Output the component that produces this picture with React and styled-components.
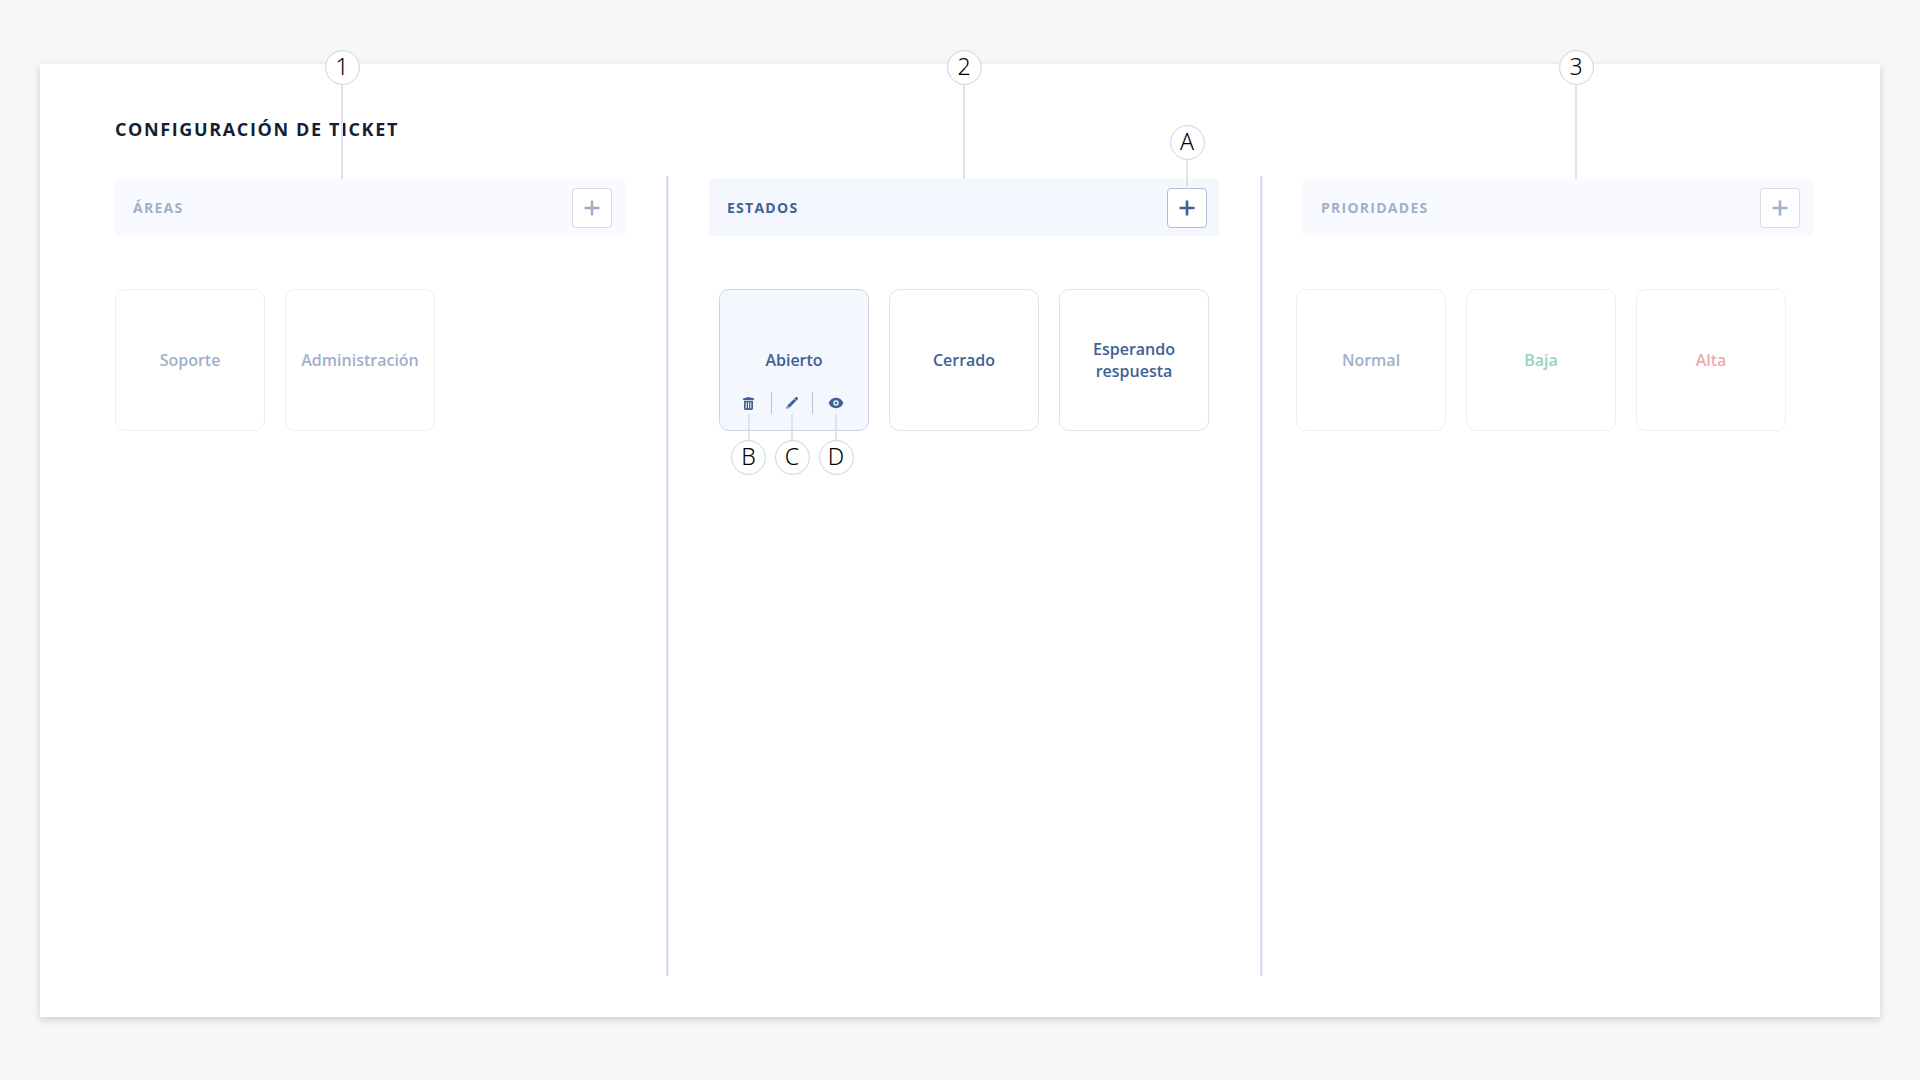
import React from "react";
import styled, { createGlobalStyle, css } from "styled-components";

const colors = {
  page: "#f7f7f7",
  panel: "#ffffff",
  ink: "#151f33",
  blue: "#3f6194",
  active: "#f4f7fe",
  line: "#d0d7e7",
  divider: "#d9deeb",
};

const GlobalStyle = createGlobalStyle`
  *, *::before, *::after { box-sizing: border-box; }
  body {
    margin: 0;
    background: ${colors.page};
    font-family: "Open Sans", "Noto Sans", sans-serif;
    color: ${colors.blue};
  }
  button { font: inherit; color: inherit; cursor: pointer; }
`;

const Page = styled.div`
  display: flex;
  min-height: 100vh;
  padding: 64px 40px 63px;
`;

const Panel = styled.main`
  flex: 1;
  display: flex;
  flex-direction: column;
  padding: 50px 67px 41px 75px;
  background: ${colors.panel};
  box-shadow: 0 3px 8px rgba(0, 0, 0, 0.17);
`;

const Title = styled.h1`
  margin: 0 0 32px;
  font-size: 18px;
  line-height: 30px;
  font-weight: 700;
  letter-spacing: 0.09em;
  text-transform: uppercase;
  color: ${colors.ink};
`;

const Board = styled.div`
  flex: 1;
  display: grid;
  grid-template-columns: 1fr 2px 1fr 2px 1fr;
  column-gap: 41px;
`;

const Divider = styled.div`
  border-radius: 1px;
  background: ${colors.divider};
  box-shadow: 1px 0 #eceff6;
`;

const Column = styled.section`
  padding-top: 3px;
  min-width: 0;
`;

const ColumnHeader = styled.header`
  position: relative;
  display: flex;
  align-items: center;
  justify-content: space-between;
  height: 57px;
  padding: 0 ${(p) => (p.$muted ? 13 : 12)}px 0 18px;
  background: ${(p) => (p.$muted ? "#f9faff" : colors.active)};
`;

const ColumnTitle = styled.h2`
  margin: 0;
  font-size: 14px;
  line-height: 20px;
  font-weight: 700;
  letter-spacing: 0.09em;
  text-transform: uppercase;
  color: ${(p) => (p.$muted ? "#9fb0ca" : colors.blue)};
`;

const AddButton = styled.button`
  position: relative;
  display: grid;
  place-items: center;
  width: 40px;
  height: 40px;
  padding: 0;
  border: 1px solid ${(p) => (p.$muted ? "#d9dce6" : "#b3bbd0")};
  border-radius: 4px;
  background: #fff;
  color: ${(p) => (p.$muted ? "#9fb0ca" : colors.blue)};
`;

const Cards = styled.ul`
  display: flex;
  gap: 20px;
  justify-content: ${(p) => p.$align || "flex-start"};
  margin: 53px 0 0 ${(p) => p.$outdent || 0}px;
  padding: 0;
  list-style: none;
`;

const tones = { default: "#9fb0ca", low: "#97d3b9", high: "#f0aaaa" };

const Card = styled.li`
  position: relative;
  flex: 0 0 150px;
  display: flex;
  align-items: center;
  justify-content: center;
  height: 142px;
  padding: 0 12px;
  border: 1px solid #dfe3ec;
  border-radius: 10px;
  background: #fff;
  font-size: 16px;
  line-height: 22px;
  font-weight: 600;
  text-align: center;
  color: ${colors.blue};
  ${(p) =>
    p.$muted &&
    css`
      border-color: #eeeff3;
      color: ${tones[p.$tone || "default"]};
    `}
  ${(p) =>
    p.$selected &&
    css`
      border-color: #ccd4e4;
      background: ${colors.active};
    `}
`;

const Actions = styled.div`
  position: absolute;
  left: 6px;
  bottom: 16px;
  display: grid;
  grid-template-columns: 45px 1px 40px 1px 46px;
  height: 22px;
`;

const Separator = styled.span`
  background: #b9c3da;
`;

const ActionButton = styled.button`
  position: relative;
  display: grid;
  place-items: center;
  padding: 0;
  border: 0;
  background: none;
`;

const CalloutBox = styled.span`
  position: absolute;
  z-index: 1;
  left: calc((100% - 35px) / 2 + ${(p) => p.$shift || 0}px);
  ${(p) => (p.$below ? "top: 100%;" : "bottom: 100%;")}
  display: flex;
  flex-direction: ${(p) => (p.$below ? "column-reverse" : "column")};
  align-items: center;
  width: 35px;
`;

const Circle = styled.span`
  display: grid;
  place-items: start center;
  width: 35px;
  height: 35px;
  border: 1px solid ${colors.line};
  box-shadow: inset 0 0 1px ${colors.line};
  border-radius: 50%;
  background: #fff;
  font-family: "Noto Sans", "Open Sans", sans-serif;
  font-size: 23px;
  line-height: 30px;
  font-weight: 300;
  color: #000;
`;

const Stem = styled.span`
  width: 2px;
  height: ${(p) => p.$length}px;
  background: #dde2ed;
`;

function Callout({ label, length, below, shift }) {
  return (
    <CalloutBox $below={below} $shift={shift}>
      <Circle>{label}</Circle>
      <Stem $length={length} />
    </CalloutBox>
  );
}

const PlusIcon = () => (
  <svg width="16" height="16" viewBox="0 0 16 16" fill="none" stroke="currentColor" strokeWidth="2.6" aria-hidden="true">
    <path d="M8 .5v15M.5 8h15" />
  </svg>
);

const TrashIcon = () => (
  <svg width="11" height="13" viewBox="0 0 11 13" aria-hidden="true">
    <path
      fill="currentColor"
      fillRule="evenodd"
      d="M3 1C3.200.4 3.600 0 4.100 0h2.800c.5 0 .9.400 1.100 1h1.900c.6 0 1 .4 1 .9v1.100H.1V1.900c0-.5.4-.9 1-.9zM4.100 1h2.800c-.1-.2-.2-.2-.4-.2h-2c-.2 0-.3 0-.4.2zM1 3.800h9v7.800c0 .8-.6 1.400-1.400 1.400H2.400C1.600 13 1 12.400 1 11.600zM2.700 5.200v6h1v-6zm2.300 0v6h1v-6zm2.300 0v6h1v-6z"
    />
  </svg>
);

const PencilIcon = () => (
  <svg width="14" height="14" viewBox="0 0 14 14" aria-hidden="true">
    <path
      fill="currentColor"
      fillRule="evenodd"
      d="M10.700 1.200c.4-.4 1-.4 1.400 0l.7.7c.4.4.4 1 0 1.400L11.400 4.700 9.300 2.600zM9 2.900l2.100 2.100-6.800 6.800-2.100-2.100zM1.800 10.200l2 2-2.700.9c-.2 0-.3-.1-.3-.3zm-.1 1.600a.5.5 0 1 0 .01 0z"
    />
  </svg>
);

const EyeIcon = () => (
  <svg width="16" height="12" viewBox="0 0 16 12" aria-hidden="true">
    <path
      fill="currentColor"
      fillRule="evenodd"
      d="M8 .8c3.200 0 5.800 1.900 7.200 4.700.2.300.2.700 0 1C13.800 9.300 11.200 11.200 8 11.200S2.200 9.300.8 6.500a1 1 0 0 1 0-1C2.200 2.700 4.800.8 8 .8zM8 3.300a2.700 2.700 0 1 0 0 5.400 2.700 2.700 0 0 0 0-5.400z"
    />
    <circle cx="8" cy="6" r="1.300" fill="currentColor" />
  </svg>
);

const columns = [
  {
    title: "Áreas",
    number: "1",
    shift: -28,
    muted: true,
    cards: [{ label: "Soporte" }, { label: "Administración" }],
  },
  {
    title: "Estados",
    number: "2",
    shift: 0,
    align: "center",
    addCallout: "A",
    cards: [{ label: "Abierto", selected: true }, { label: "Cerrado" }, { label: "Esperando respuesta" }],
  },
  {
    title: "Prioridades",
    number: "3",
    shift: 18,
    muted: true,
    outdent: -7,
    cards: [{ label: "Normal" }, { label: "Baja", tone: "low" }, { label: "Alta", tone: "high" }],
  },
];

const CardActions = () => (
  <Actions>
    <ActionButton type="button" aria-label="Eliminar">
      <TrashIcon />
      <Callout label="B" length={26} below />
    </ActionButton>
    <Separator />
    <ActionButton type="button" aria-label="Editar">
      <PencilIcon />
      <Callout label="C" length={26} below />
    </ActionButton>
    <Separator />
    <ActionButton type="button" aria-label="Ver">
      <EyeIcon />
      <Callout label="D" length={26} below />
    </ActionButton>
  </Actions>
);

export default function App() {
  return (
    <>
      <GlobalStyle />
      <Page>
        <Panel>
          <Title>Configuración de ticket</Title>
          <Board>
            {columns.map((col, i) => (
              <React.Fragment key={col.title}>
                {i > 0 && <Divider />}
                <Column>
                  <ColumnHeader $muted={col.muted}>
                    <ColumnTitle $muted={col.muted}>{col.title}</ColumnTitle>
                    <AddButton type="button" $muted={col.muted} aria-label={`Agregar a ${col.title}`}>
                      <PlusIcon />
                      {col.addCallout && <Callout label={col.addCallout} length={29} />}
                    </AddButton>
                    <Callout label={col.number} length={94} shift={col.shift} />
                  </ColumnHeader>
                  <Cards $align={col.align} $outdent={col.outdent}>
                    {col.cards.map((card) => (
                      <Card key={card.label} $muted={col.muted} $tone={card.tone} $selected={card.selected}>
                        {card.label}
                        {card.selected && <CardActions />}
                      </Card>
                    ))}
                  </Cards>
                </Column>
              </React.Fragment>
            ))}
          </Board>
        </Panel>
      </Page>
    </>
  );
}
